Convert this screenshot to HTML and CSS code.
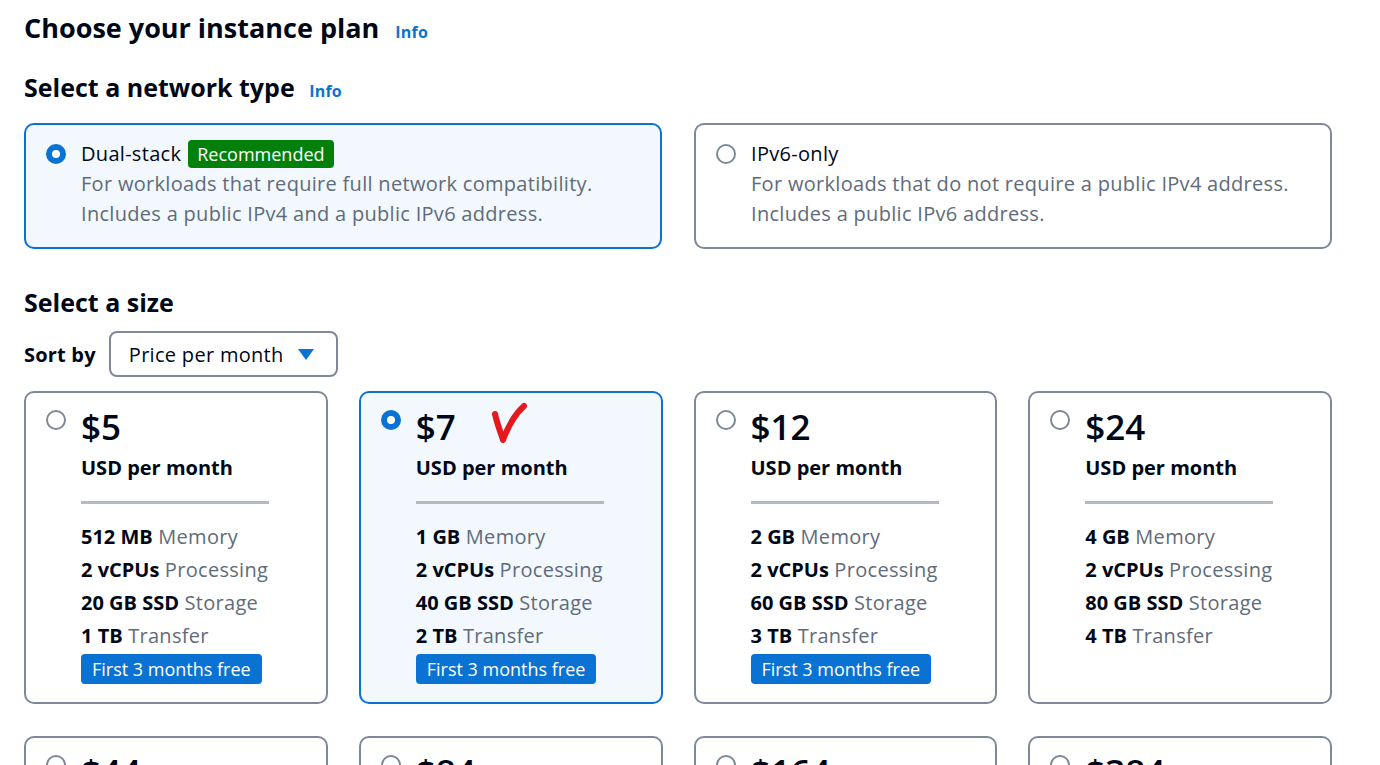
FILE: index.html
```html
<!DOCTYPE html>
<html lang="en">
<head>
<meta charset="utf-8">
<title>Choose your instance plan</title>
<link rel="stylesheet" href="styles.css">
</head>
<body>
<div class="page">
  <h1 class="title">Choose your instance plan <a class="info info-lg" href="#">Info</a></h1>
  <h2 class="subtitle st-network">Select a network type <a class="info" href="#">Info</a></h2>
  <div class="net-grid">
    <div class="net-card selected">
      <span class="radio on"></span>
      <div class="net-body">
        <div class="net-label">Dual-stack <span class="badge-green">Recommended</span></div>
        <div class="net-desc">For workloads that require full network compatibility.</div>
        <div class="net-desc">Includes a public IPv4 and a public IPv6 address.</div>
      </div>
    </div>
    <div class="net-card">
      <span class="radio"></span>
      <div class="net-body">
        <div class="net-label">IPv6-only</div>
        <div class="net-desc">For workloads that do not require a public IPv4 address.</div>
        <div class="net-desc">Includes a public IPv6 address.</div>
      </div>
    </div>
  </div>

  <h2 class="subtitle st-size">Select a size</h2>
  <div class="sort-row">
    <span class="sort-label">Sort by</span>
    <div class="select">Price per month <span class="caret"></span></div>
  </div>

  <div class="size-grid">
    <div class="size-card">
      <span class="radio"></span>
      <div class="size-body">
        <div class="price">$5</div>
        <div class="per">USD per month</div>
        <div class="divider"></div>
        <ul class="specs">
          <li><b>512 MB</b> Memory</li>
          <li><b>2 vCPUs</b> Processing</li>
          <li><b>20 GB SSD</b> Storage</li>
          <li><b>1 TB</b> Transfer</li>
        </ul>
        <span class="badge-blue">First 3 months free</span>
      </div>
    </div>
    <div class="size-card selected">
      <span class="radio on"></span>
      <div class="size-body">
        <div class="price">$7</div>
        <div class="per">USD per month</div>
        <div class="divider"></div>
        <ul class="specs">
          <li><b>1 GB</b> Memory</li>
          <li><b>2 vCPUs</b> Processing</li>
          <li><b>40 GB SSD</b> Storage</li>
          <li><b>2 TB</b> Transfer</li>
        </ul>
        <span class="badge-blue">First 3 months free</span>
      </div>
      <svg class="check" width="42" height="46" viewBox="0 0 42 46"><path d="M6 13 C8 22 11 30 14 39 C18 28 24 15 35 5" fill="none" stroke="#e5181e" stroke-width="6" stroke-linecap="round" stroke-linejoin="round"/></svg>
    </div>
    <div class="size-card">
      <span class="radio"></span>
      <div class="size-body">
        <div class="price">$12</div>
        <div class="per">USD per month</div>
        <div class="divider"></div>
        <ul class="specs">
          <li><b>2 GB</b> Memory</li>
          <li><b>2 vCPUs</b> Processing</li>
          <li><b>60 GB SSD</b> Storage</li>
          <li><b>3 TB</b> Transfer</li>
        </ul>
        <span class="badge-blue">First 3 months free</span>
      </div>
    </div>
    <div class="size-card">
      <span class="radio"></span>
      <div class="size-body">
        <div class="price">$24</div>
        <div class="per">USD per month</div>
        <div class="divider"></div>
        <ul class="specs">
          <li><b>4 GB</b> Memory</li>
          <li><b>2 vCPUs</b> Processing</li>
          <li><b>80 GB SSD</b> Storage</li>
          <li><b>4 TB</b> Transfer</li>
        </ul>
      </div>
    </div>
    <div class="size-card">
      <span class="radio"></span>
      <div class="size-body">
        <div class="price">$44</div>
        <div class="per">USD per month</div>
        <div class="divider"></div>
        <ul class="specs">
          <li><b>8 GB</b> Memory</li>
          <li><b>2 vCPUs</b> Processing</li>
          <li><b>160 GB SSD</b> Storage</li>
          <li><b>5 TB</b> Transfer</li>
        </ul>
      </div>
    </div>
    <div class="size-card">
      <span class="radio"></span>
      <div class="size-body">
        <div class="price">$84</div>
        <div class="per">USD per month</div>
        <div class="divider"></div>
        <ul class="specs">
          <li><b>16 GB</b> Memory</li>
          <li><b>4 vCPUs</b> Processing</li>
          <li><b>320 GB SSD</b> Storage</li>
          <li><b>6 TB</b> Transfer</li>
        </ul>
      </div>
    </div>
    <div class="size-card">
      <span class="radio"></span>
      <div class="size-body">
        <div class="price">$164</div>
        <div class="per">USD per month</div>
        <div class="divider"></div>
        <ul class="specs">
          <li><b>32 GB</b> Memory</li>
          <li><b>8 vCPUs</b> Processing</li>
          <li><b>640 GB SSD</b> Storage</li>
          <li><b>7 TB</b> Transfer</li>
        </ul>
      </div>
    </div>
    <div class="size-card">
      <span class="radio"></span>
      <div class="size-body">
        <div class="price">$384</div>
        <div class="per">USD per month</div>
        <div class="divider"></div>
        <ul class="specs">
          <li><b>64 GB</b> Memory</li>
          <li><b>16 vCPUs</b> Processing</li>
          <li><b>1280 GB SSD</b> Storage</li>
          <li><b>8 TB</b> Transfer</li>
        </ul>
      </div>
    </div>
  </div>
</div>
</body>
</html>
```

FILE: styles.css
```css
* { box-sizing: border-box; }
html, body { margin: 0; padding: 0; background: #ffffff; }
body {
  font-family: "Open Sans", "Liberation Sans", Arial, sans-serif;
  color: #000716;
}
.page {
  width: 1380px;
  padding: 10px 48px 40px 24px;
  display: flex;
  flex-direction: column;
}
.title {
  margin: 0;
  font-size: 27px;
  line-height: 36px;
  font-weight: 700;
}
.subtitle {
  margin: 0;
  font-size: 25px;
  line-height: 32px;
  font-weight: 700;
}
.st-network { margin-top: 21px; }
.st-size { margin-top: 37px; }
.info {
  color: #0972d3;
  font-size: 16px;
  font-weight: 700;
  text-decoration: none;
  margin-left: 8px;
  letter-spacing: 0.2px;
}
.info-lg { margin-left: 9px; }

.net-grid {
  margin-top: 16px;
  display: grid;
  grid-template-columns: 1fr 1fr;
  gap: 32px;
}
.net-card {
  border: 2px solid #7d8998;
  border-radius: 10px;
  padding: 14px 20px 17px 20px;
  height: 126px;
  display: flex;
  gap: 15px;
  background: #fff;
}
.net-card.selected, .size-card.selected {
  border-color: #0972d3;
  background: #f2f8fd;
}
.radio {
  flex: none;
  width: 20px;
  height: 20px;
  border-radius: 50%;
  border: 2px solid #7d8998;
  background: #fff;
  margin-top: 5px;
}
.radio.on {
  border: 6px solid #0972d3;
}
.net-body { display: flex; flex-direction: column; }
.net-label {
  font-size: 20px;
  line-height: 30px;
  letter-spacing: 0.3px;
  display: flex;
  align-items: center;
  gap: 7px;
}
.badge-green {
  background: #037f0c;
  color: #fff;
  font-size: 18px;
  line-height: 28px;
  padding: 0 9px;
  border-radius: 4px;
  font-weight: 500;
  letter-spacing: 0;
}
.net-desc {
  font-size: 20px;
  line-height: 30px;
  letter-spacing: 0.3px;
  color: #5f6b7a;
}

.sort-row {
  margin-top: 13px;
  display: flex;
  align-items: center;
  gap: 13px;
}
.sort-label {
  font-size: 20px;
  font-weight: 700;
  letter-spacing: 0.2px;
}
.select {
  width: 229px;
  height: 46px;
  border: 2px solid #7d8998;
  border-radius: 8px;
  padding: 0 22px 0 18px;
  display: flex;
  align-items: center;
  justify-content: space-between;
  font-size: 20px;
  letter-spacing: 0.3px;
}
.caret {
  width: 0;
  height: 0;
  border-left: 8px solid transparent;
  border-right: 8px solid transparent;
  border-top: 11px solid #0972d3;
}

.size-grid {
  margin-top: 14px;
  display: grid;
  grid-template-columns: repeat(4, 1fr);
  column-gap: 31px;
  row-gap: 32px;
}
.size-card {
  position: relative;
  height: 313px;
  border: 2px solid #7d8998;
  border-radius: 10px;
  padding: 9px 20px 17px 20px;
  display: flex;
  gap: 15px;
  background: #fff;
}
.size-card .radio { margin-top: 8px; }
.size-body { display: flex; flex-direction: column; align-items: flex-start; }
.price {
  font-size: 35px;
  line-height: 50px;
  font-weight: 600;
}
.per {
  font-size: 20px;
  line-height: 32px;
  font-weight: 700;
}
.divider {
  width: 188px;
  height: 3px;
  background: #b4bac4;
  margin-top: 17px;
}
.specs {
  list-style: none;
  margin: 16px 0 0 0;
  padding: 0;
}
.specs li {
  font-size: 20px;
  line-height: 33px;
  letter-spacing: 0.3px;
  color: #5f6b7a;
}
.specs b { color: #000716; font-weight: 700; letter-spacing: 0; }
.badge-blue {
  margin-top: 2px;
  background: #0972d3;
  color: #fff;
  font-size: 18px;
  line-height: 30px;
  padding: 0 11px;
  border-radius: 4px;
  font-weight: 500;
}
.check {
  position: absolute;
  left: 128px;
  top: 8px;
}
```
